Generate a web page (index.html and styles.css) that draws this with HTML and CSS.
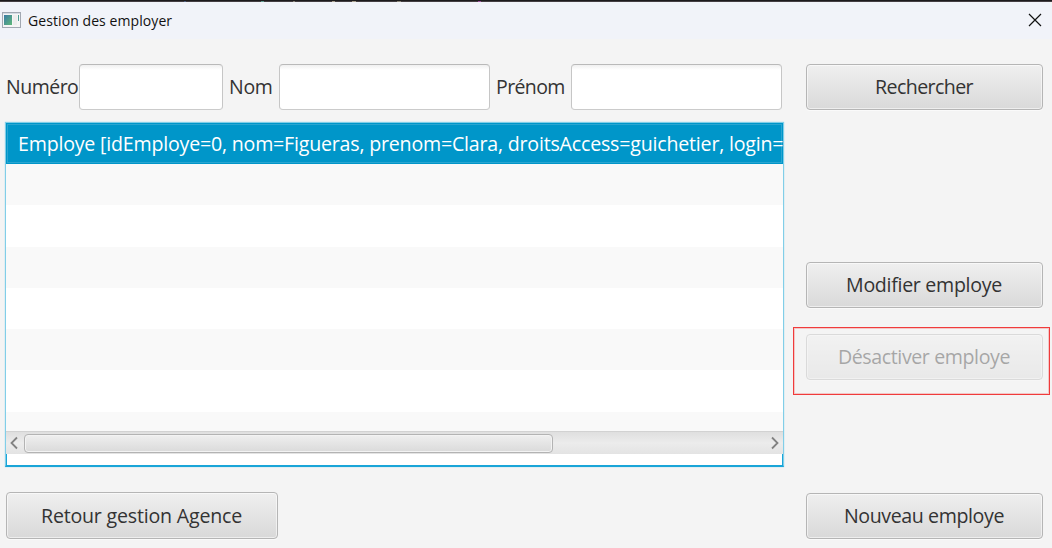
FILE: index.html
```html
<!DOCTYPE html>
<html lang="fr">
<head>
<meta charset="utf-8">
<title>Gestion des employer</title>
<link rel="stylesheet" href="styles.css">
</head>
<body>
<div class="backdrop"><i class="s1"></i><i class="s2"></i><i class="s3"></i><i class="s4"></i><i class="s5"></i><i class="s6"></i><i class="s7"></i></div>
<div class="window">
  <header class="titlebar">
    <svg class="app-icon" width="19" height="16" viewBox="0 0 19 16">
      <defs><linearGradient id="pane" x1="0" y1="0" x2="1" y2="1"><stop offset="0" stop-color="#3b7ba6"/><stop offset="1" stop-color="#5fb878"/></linearGradient></defs>
      <rect x=".5" y=".5" width="18" height="15" fill="#f5f5f5" stroke="#a2a8b2"/>
      <path d="M1 1.5h17" stroke="#d3dbe4"/>
      <rect x="2" y="3" width="8" height="10" fill="url(#pane)"/>
      <rect x="11" y="3" width="4" height="10" fill="#ececec"/>
      <rect x="16" y="3" width="1" height="6" fill="#4f9c94"/>
    </svg>
    <h1 class="title">Gestion des employer</h1>
    <svg class="close" width="14" height="14" viewBox="0 0 14 14"><path d="M1 1l12 12M13 1L1 13" stroke="#111" stroke-width="1.2" fill="none"/></svg>
  </header>
  <main class="content">
    <section class="main-col">
      <div class="search">
        <label class="label numero" for="num">Numéro</label><input class="field short" id="num">
        <label class="label nom" for="nom">Nom</label><input class="field" id="nom">
        <label class="label prenom" for="prenom">Prénom</label><input class="field" id="prenom">
      </div>
      <div class="list">
        <div class="row selected"><span class="row-text">Employe [idEmploye=0, nom=Figueras, prenom=Clara, droitsAccess=guichetier, login=</span></div>
        <div class="rows"></div>
        <div class="scrollbar">
          <svg class="arrow" width="8" height="14" viewBox="0 0 8 14"><path d="M7 1.5L1.5 7L7 12.5" fill="none" stroke="#828282" stroke-width="1.8"/></svg>
          <div class="track"><div class="thumb"></div></div>
          <svg class="arrow" width="8" height="14" viewBox="0 0 8 14"><path d="M1 1.5L6.5 7L1 12.5" fill="none" stroke="#828282" stroke-width="1.8"/></svg>
        </div>
      </div>
      <button class="btn back"><span class="t-retour">Retour gestion Agence</span></button>
    </section>
    <aside class="side-col">
      <button class="btn"><span class="t-rechercher">Rechercher</span></button>
      <button class="btn modify"><span class="t-modifier">Modifier employe</span></button>
      <div class="highlight"><button class="btn" disabled><span class="t-desactiver">Désactiver employe</span></button></div>
      <button class="btn create"><span class="t-nouveau">Nouveau employe</span></button>
    </aside>
  </main>
</div>
</body>
</html>
```
FILE: styles.css
```css
* { box-sizing: border-box; }
body { margin: 0; width: 1052px; height: 548px; overflow: hidden; background: #f4f4f4; font-family: "Open Sans", "Noto Sans", sans-serif; color: #333; }
.backdrop { height: 2px; background: linear-gradient(#1c1a1c 50%, #443e42 50%); display: flex; padding-left: 184px; }
.backdrop i { height: 1px; margin-top: 1px; width: 2px; background: #8b8578; }
.backdrop .s1 { background: #4f5f80; }
.backdrop .s2 { margin-left: 75px; width: 3px; background: #5f9a8e; }
.backdrop .s3 { margin-left: 29px; }
.backdrop .s4 { margin-left: 37px; width: 3px; background: #a89e8b; }
.backdrop .s5 { margin-left: 17px; width: 4px; background: #a89e8b; }
.backdrop .s6 { margin-left: 41px; width: 4px; }
.backdrop .s7 { margin-left: 77px; width: 3px; background: #a04fa3; }
.window { height: 546px; background: #f4f4f4; border-radius: 5px 5px 0 0; overflow: hidden; }
.titlebar { height: 37px; padding: 0 10px 0 2px; display: flex; align-items: center; background: #f1f3f9; }
.app-icon { flex: none; margin-top: -1px; }
.title { margin: 0 0 0 7px; font-size: 14px; font-weight: 400; letter-spacing: .08px; color: #111; line-height: 20px; white-space: nowrap; }
.close { margin-left: auto; margin-top: -1px; }
.content { display: flex; justify-content: space-between; height: 509px; padding: 25px 9px 0 5px; }
.main-col { width: 779px; }
.search { display: flex; align-items: center; height: 46px; padding-left: 1px; }
.label { flex: none; font-size: 19.5px; line-height: 28px; white-space: nowrap; }
.numero { width: 73px; letter-spacing: -.5px; }
.nom { width: 50px; margin-left: 6px; letter-spacing: -.3px; }
.prenom { width: 75px; margin-left: 6px; letter-spacing: -.6px; }
.field { flex: none; width: 211px; height: 46px; border: 1px solid; border-color: #b9b9b9 #c6c6c6 #cbcbcb; border-radius: 4px; background: linear-gradient(#f0f0f0, #fff 5px); padding: 0 8px; font: inherit; font-size: 20px; outline: 0; }
.short { width: 144px; }
.list { height: 345px; margin-top: 12px; border: 1px solid #81cee8; border-bottom: 2px solid #1aa5d8; background: #fff; box-shadow: 0 0 1px #81cee8; display: flex; flex-direction: column; }
.row { flex: none; height: 41px; overflow: hidden; }
.selected { background: #0096c9; color: #fff; box-shadow: inset 0 0 0 1px #0096c9, inset 0 0 0 2px #2aa5d1; padding: 7px 0 0 12px; }
.row-text { display: block; font-size: 19.6px; line-height: 28px; letter-spacing: -.2px; white-space: nowrap; }
.rows { flex: none; height: 267px; background: repeating-linear-gradient(#f9f9f9 0 41.3px, #fff 41.3px 82.6px); }
.scrollbar { flex: none; height: 23px; padding: 0 4px; display: flex; align-items: center; border-top: 1px solid #d2d2d2; background: linear-gradient(#dfdfdf, #ececec 50%, #e3e3e3); }
.arrow { flex: none; }
.track { flex: 1; padding: 0 6px; }
.thumb { width: 529px; height: 19px; border: 1px solid #b3b3b3; border-radius: 4px; background: linear-gradient(#efefef, #dadada); box-shadow: inset 0 0 0 1px #f3f3f3; }
.list::after { content: ""; flex: 1; border: solid #1aa5d8; border-width: 0 1px; }
.btn { display: flex; align-items: center; justify-content: center; flex: none; width: 237px; height: 46px; padding: 0; border: 1px solid #b5b5b5; border-radius: 4px; background: linear-gradient(#efefef, #d9d9d9); box-shadow: inset 0 0 0 1px rgba(255,255,255,.55), 0 1px 0 #fafafa; color: #333; font-family: inherit; font-size: 19.6px; line-height: 28px; white-space: nowrap; }
.btn:disabled { opacity: .4; }
.back { width: 272px; height: 47px; margin: 25px 0 0 1px; }
.side-col { margin-right: -7px; display: flex; flex-direction: column; width: 257px; }
.modify { margin-top: 152px; }
.highlight { width: 257px; height: 68px; margin-top: 19px; padding: 6px 0 0 12px; border: 1px solid #f03b3b; box-shadow: inset 0 0 0 1px rgba(240,59,59,.25); }
.create { margin-top: 98px; }
.side-col > .btn { margin-left: 13px; }
.t-retour { letter-spacing: -.2px; }
.t-rechercher { letter-spacing: -.6px; }
.t-modifier { letter-spacing: -.3px; }
.t-desactiver, .t-nouveau { letter-spacing: -.4px; }
.btn span { margin-right: 1px; }
```
